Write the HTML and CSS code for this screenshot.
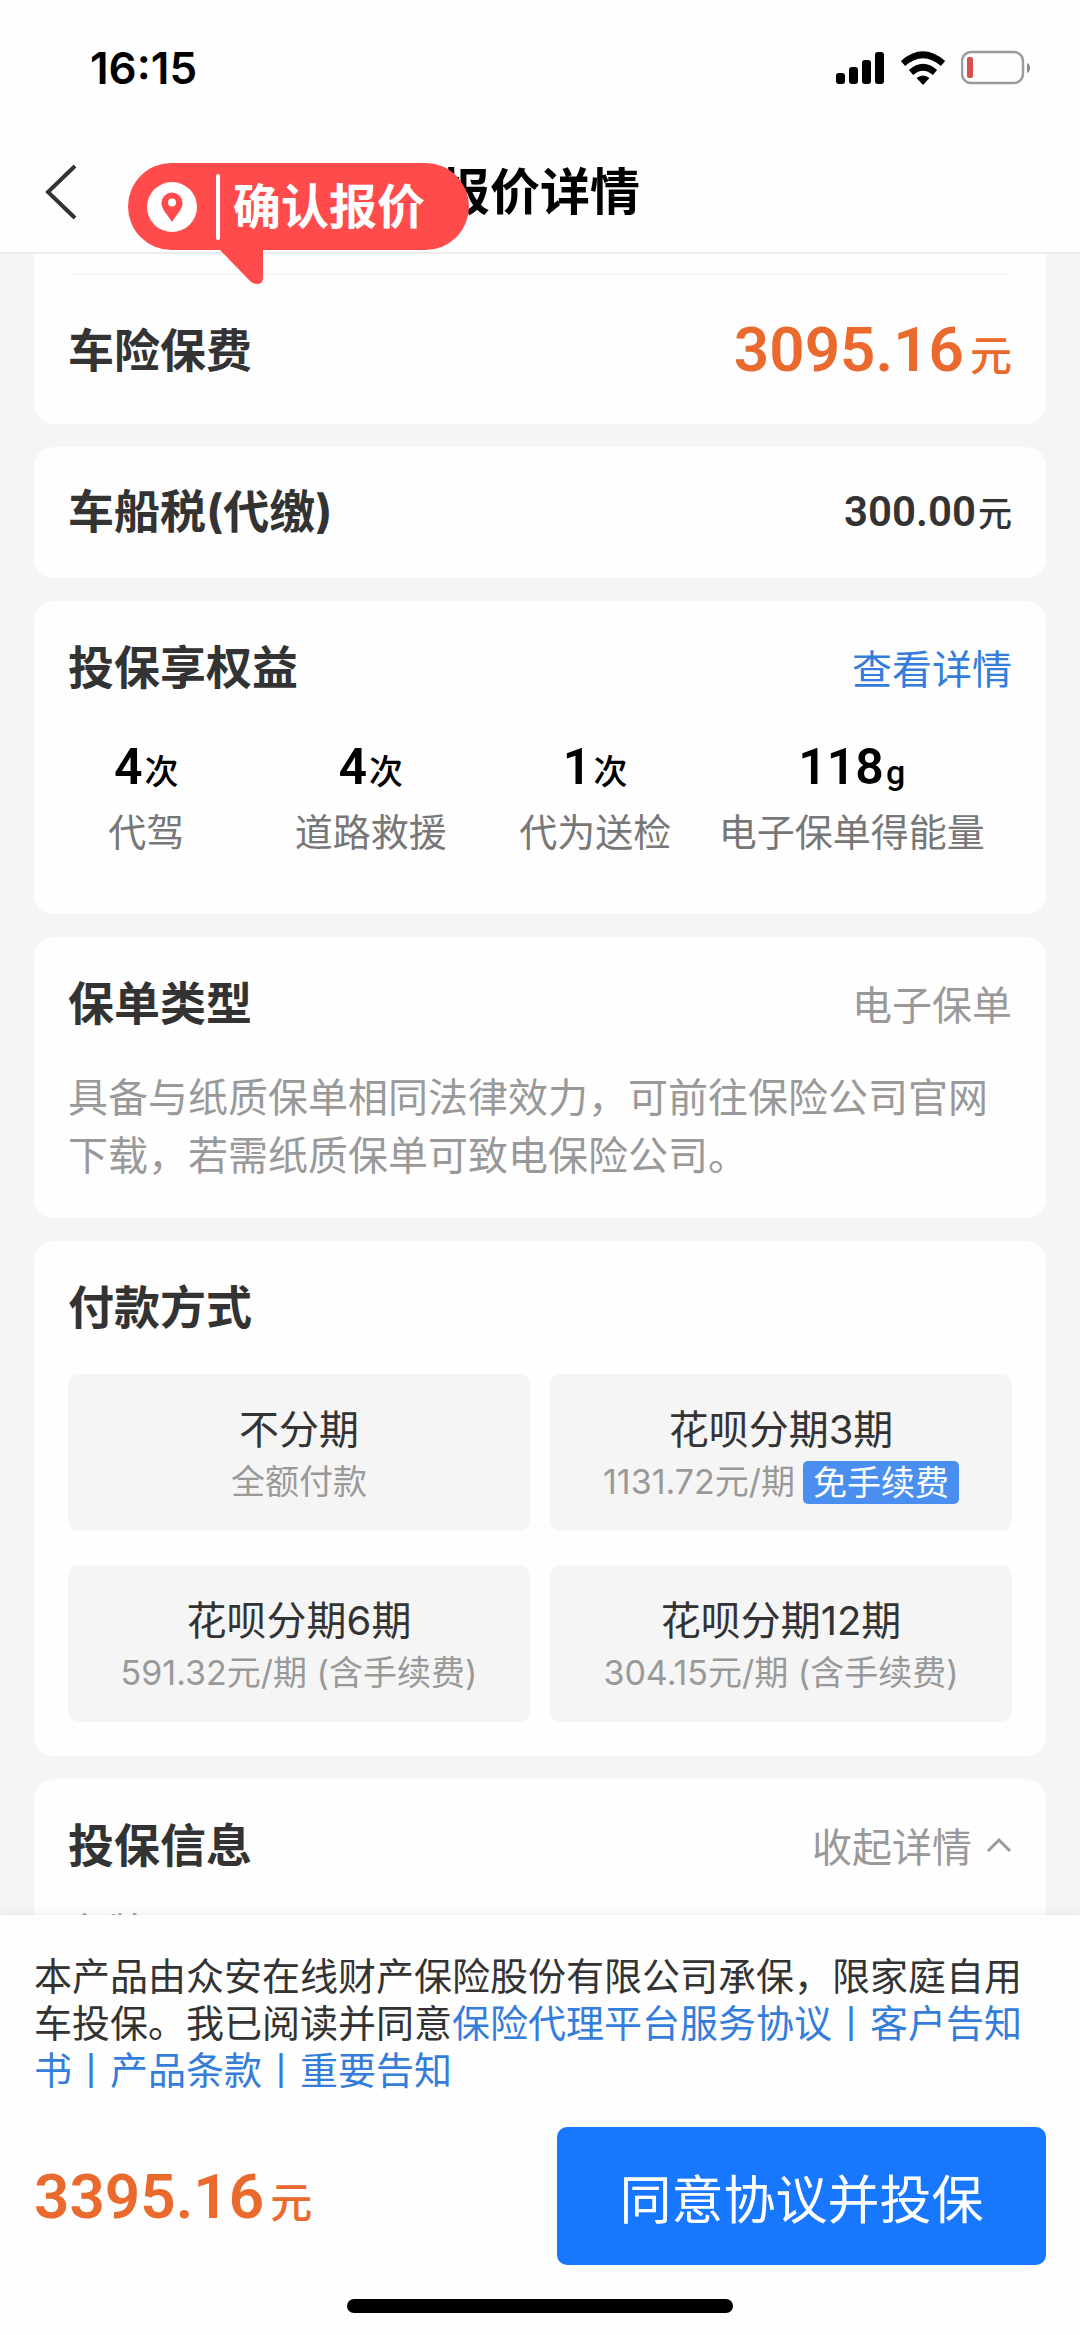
FILE: index.html
```html
<!DOCTYPE html>
<html lang="zh-CN">
<head>
<meta charset="utf-8">
<meta name="viewport" content="width=device-width, initial-scale=1">
<title>报价详情</title>
<link rel="stylesheet" href="styles.css">
</head>
<body>
<div class="app">
  <header class="top">
    <div class="status">
      <span class="time">16:15</span>
      <div class="status-icons">
        <svg width="49" height="34" viewBox="0 0 49 34" aria-hidden="true"><rect x="0" y="22" width="9" height="11" rx="3"/><rect x="13" y="16" width="9" height="17" rx="3"/><rect x="26" y="9" width="9" height="24" rx="3"/><rect x="39" y="1" width="9" height="32" rx="3"/></svg>
        <svg width="46" height="34" viewBox="0 0 46 34" aria-hidden="true"><path d="M3 12.500 Q23 -5 43 12.500" fill="none" stroke="#000" stroke-width="6.500"/><path d="M11 21.500 Q23 11 35 21.500" fill="none" stroke="#000" stroke-width="6.500"/><path d="M16.500 27 Q23 22 29.500 27 L23 34Z"/></svg>
        <svg width="70" height="36" viewBox="0 0 70 36" aria-hidden="true"><rect x="1" y="2" width="61" height="31" rx="9" fill="none" stroke="#9b9b9b" stroke-width="2.500"/><path d="M66 13 Q69 14 69 18 Q69 22 66 23Z" fill="#8a8a8a"/><rect x="6" y="7" width="6" height="21" rx="2" fill="#d8504a"/></svg>
      </div>
    </div>
    <nav class="nav">
      <button class="back" type="button" aria-label="返回">
        <svg width="34" height="56" viewBox="0 0 34 56" aria-hidden="true"><path d="M31 2 L4 28 L31 54" fill="none" stroke="#333" stroke-width="4"/></svg>
      </button>
      <h1 class="page-title">报价详情</h1>
      <div class="callout">
        <svg class="pin" width="50" height="50" viewBox="0 0 50 50" aria-hidden="true"><circle cx="25" cy="25" r="25" fill="#fff"/><path d="M25 40 C19 31 14.500 27 14.500 21 A10.500 10.500 0 0 1 35.500 21 C35.500 27 31 31 25 40Z" fill="#ff4b4b"/><circle cx="25" cy="20.500" r="4" fill="#fff"/></svg>
        <span class="callout-bar"></span>
        <span class="callout-text">确认报价</span>
        <svg class="tail" width="44" height="36" viewBox="0 0 44 36" aria-hidden="true"><path d="M0 0 H44 V29 Q44 35 38 35 Q34 35 31 32Z" fill="#ff4b4b"/></svg>
      </div>
    </nav>
  </header>

  <main class="content">
    <section class="card premium">
      <div class="row">
        <h2>车险保费</h2>
        <p class="price">3095.16<span class="unit">元</span></p>
      </div>
    </section>

    <section class="card tax">
      <div class="row">
        <h2>车船税(代缴)</h2>
        <p class="amount">300.00<span class="unit">元</span></p>
      </div>
    </section>

    <section class="card benefits">
      <div class="row">
        <h2>投保享权益</h2>
        <a class="link" href="#benefits">查看详情</a>
      </div>
      <ul class="benefit-list">
        <li><span class="count">4<span class="unit">次</span></span><span>代驾</span></li>
        <li><span class="count">4<span class="unit">次</span></span><span>道路救援</span></li>
        <li><span class="count">1<span class="unit">次</span></span><span>代为送检</span></li>
        <li><span class="count">118<span class="unit">g</span></span><span>电子保单得能量</span></li>
      </ul>
    </section>

    <section class="card policy">
      <div class="row">
        <h2>保单类型</h2>
        <span class="muted">电子保单</span>
      </div>
      <p class="note">具备与纸质保单相同法律效力，可前往保险公司官网下载，若需纸质保单可致电保险公司。</p>
    </section>

    <section class="card payment">
      <div class="row">
        <h2>付款方式</h2>
      </div>
      <div class="options">
        <button class="option" type="button"><span class="option-name">不分期</span><span class="option-sub">全额付款</span></button>
        <button class="option" type="button"><span class="option-name">花呗分期3期</span><span class="option-sub">1131.72元/期<span class="tag">免手续费</span></span></button>
        <button class="option" type="button"><span class="option-name">花呗分期6期</span><span class="option-sub">591.32元/期 (含手续费)</span></button>
        <button class="option" type="button"><span class="option-name">花呗分期12期</span><span class="option-sub">304.15元/期 (含手续费)</span></button>
      </div>
    </section>

    <section class="card insured">
      <div class="row">
        <h2>投保信息</h2>
        <button class="fold" type="button">收起详情<svg width="26" height="16" viewBox="0 0 26 16" aria-hidden="true"><path d="M2 14 L13 3 L24 14" fill="none" stroke="#999" stroke-width="3"/></svg></button>
      </div>
      <p class="field">车牌</p>
    </section>
  </main>

  <footer class="checkout">
    <p class="terms">本产品由众安在线财产保险股份有限公司承保，限家庭自用车投保。我已阅读并同意<a href="#service">保险代理平台服务协议</a><span class="sep">丨</span><a href="#notice">客户告知书</a><span class="sep">丨</span><a href="#clauses">产品条款</a><span class="sep">丨</span><a href="#important">重要告知</a></p>
    <div class="pay">
      <p class="price">3395.16<span class="unit">元</span></p>
      <button class="submit" type="button">同意协议并投保</button>
    </div>
    <div class="home-bar"></div>
  </footer>
</div>
</body>
</html>
```
FILE: styles.css
```css
* {
  box-sizing: border-box;
}

body,
h1,
h2,
p,
ul {
  margin: 0;
  padding: 0;
}

body {
  background: #f5f5f5;
  color: #333;
  font-family: Inter, "Noto Sans CJK SC", sans-serif;
  font-size: 40px;
}

button {
  border: 0;
  padding: 0;
  background: none;
  color: inherit;
  font: inherit;
}

a {
  color: #347ddb;
  text-decoration: none;
}

.app {
  display: flex;
  flex-direction: column;
  height: 100vh;
}

/* Status bar and navigation */
.top {
  flex: none;
  background: #fefefe;
  border-bottom: 2px solid #ececec;
}

.status {
  display: flex;
  align-items: center;
  justify-content: space-between;
  height: 136px;
  padding: 0 49px 0 90px;
  color: #000;
}

.time {
  font-size: 44px;
  font-weight: 600;
}

.status-icons {
  display: flex;
  align-items: center;
  gap: 15px;
}

.nav {
  position: relative;
  display: flex;
  align-items: center;
  justify-content: center;
  height: 116px;
  padding-bottom: 5px;
}

.back {
  position: absolute;
  left: 44px;
  display: flex;
}

.page-title {
  color: #000;
  font-size: 50px;
  font-weight: 700;
  line-height: 72px;
}

.callout {
  position: absolute;
  left: 128px;
  top: 27px;
  display: flex;
  align-items: center;
  width: 341px;
  height: 87px;
  padding-left: 19px;
  border-radius: 44px;
  background: #ff4b4b;
  color: #fff;
}

.callout-bar {
  width: 4px;
  height: 66px;
  margin: 0 13px 0 19px;
  border-radius: 2px;
  background: #fff;
}

.callout-text {
  font-size: 48px;
  font-weight: 700;
  line-height: 66px;
}

.tail {
  position: absolute;
  left: 91px;
  top: 86px;
}

/* Scrolling cards */
.content {
  flex: 1;
  min-height: 0;
  display: flex;
  flex-direction: column;
  gap: 23px;
  padding: 0 34px;
  overflow-y: auto;
  scrollbar-width: none;
}

.card {
  flex: none;
  padding: 36px 34px;
  border-radius: 20px;
  background: #fefefe;
}

.row {
  display: flex;
  align-items: center;
  justify-content: space-between;
  height: 60px;
}

h2 {
  font-size: 46px;
  font-weight: 700;
  line-height: 60px;
}

.premium {
  padding-top: 20px;
  padding-bottom: 0;
  border-radius: 0 0 20px 20px;
}

.premium .row {
  height: 150px;
  border-top: 1px solid #f3f3f3;
}

.price {
  padding-top: 8px;
  color: #ea6a2e;
  font-family: Roboto, "Noto Sans CJK SC", sans-serif;
  font-size: 62px;
  font-weight: 600;
  line-height: 72px;
}

.price .unit {
  margin-left: 6px;
  font-size: 42px;
  font-weight: 500;
}

.amount {
  padding-top: 4px;
  font-family: Roboto, "Noto Sans CJK SC", sans-serif;
  font-size: 42px;
  font-weight: 600;
  line-height: 60px;
}

.amount .unit,
.count .unit {
  margin-left: 2px;
  font-size: 34px;
  font-weight: 500;
}

.tax {
  padding-top: 34px;
  padding-bottom: 37px;
}

.benefits {
  padding-bottom: 54px;
}

.benefit-list {
  display: grid;
  grid-template-columns: 7fr 7fr 7fr 9fr;
  margin: 38px 16px 0 -34px;
  list-style: none;
  color: #777;
  font-size: 38px;
  line-height: 56px;
}

.benefit-list li {
  display: flex;
  flex-direction: column;
  align-items: center;
  white-space: nowrap;
}

.count {
  color: #000;
  font-family: Roboto, "Noto Sans CJK SC", sans-serif;
  font-size: 50px;
  font-weight: 600;
  line-height: 64px;
}

.muted,
.note {
  color: #999;
}

.note {
  margin-top: 36px;
  line-height: 58px;
}

.policy {
  padding-bottom: 33px;
}

.payment {
  padding-bottom: 34px;
}

.options {
  display: grid;
  grid-template-columns: 1fr 1fr;
  gap: 34px 20px;
  margin-top: 37px;
}

.option {
  display: flex;
  flex-direction: column;
  align-items: center;
  padding: 28px 0 25px;
  border-radius: 10px;
  background: #f5f5f5;
}

.option-name {
  line-height: 56px;
}

.option-sub {
  display: flex;
  align-items: center;
  gap: 8px;
  color: #999;
  font-size: 34px;
  line-height: 48px;
  white-space: pre;
}

.tag {
  padding: 0 10px;
  border-radius: 5px;
  background: #4a8ff0;
  color: #fff;
  line-height: 43px;
}

.insured {
  padding-bottom: 0;
}

.fold {
  display: flex;
  align-items: center;
  gap: 14px;
  color: #999;
}

.field {
  margin-top: 28px;
  color: #999;
  line-height: 60px;
}

/* Terms and payment bar */
.checkout {
  position: relative;
  flex: none;
  padding: 38px 34px 22px;
  background: #fefefe;
  box-shadow: 0 -2px 10px rgba(0, 0, 0, 0.06);
}

.terms {
  font-size: 38px;
  line-height: 47px;
}

.sep {
  color: #347ddb;
}

.pay {
  display: flex;
  align-items: center;
  justify-content: space-between;
  margin-top: 33px;
}

.submit {
  width: 489px;
  height: 138px;
  border-radius: 10px;
  background: #1877ff;
  color: #fff;
  font-size: 52px;
}

.home-bar {
  width: 386px;
  height: 14px;
  margin: 34px auto 0;
  border-radius: 7px;
  background: #000;
}
```
